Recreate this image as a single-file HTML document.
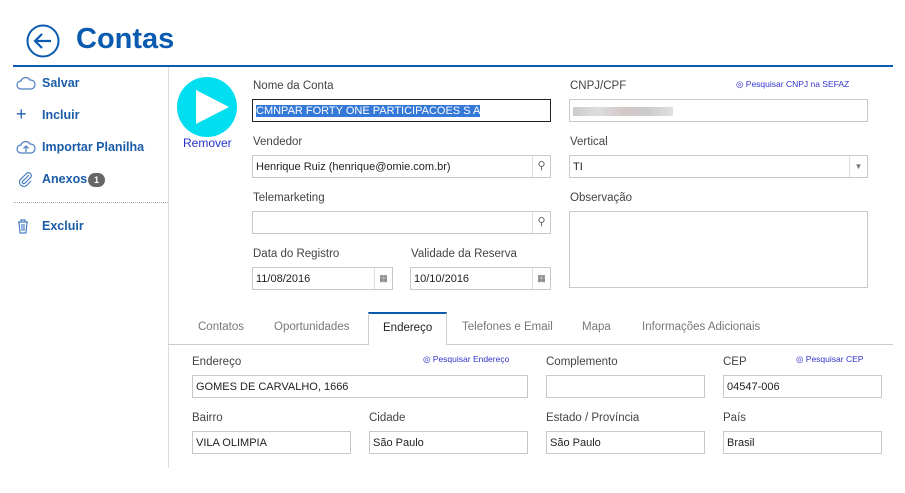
<!DOCTYPE html>
<html><head><meta charset="utf-8"><style>
*{box-sizing:border-box;margin:0;padding:0}
body{width:905px;height:493px;background:#fff;font-family:"Liberation Sans",sans-serif;position:relative;overflow:hidden;color:#333}
.a{position:absolute}
.lbl{position:absolute;font-size:11.5px;color:#444}
.in{position:absolute;border:1px solid #c8c8c8;height:23px;font-size:11px;line-height:23px;padding-left:3px;color:#222;background:#fff}
.side{position:absolute;left:42px;font-size:12.5px;font-weight:bold;color:#1a5ca8}
.tab{position:absolute;top:321px;font-size:11.5px;color:#777}
.lnk{position:absolute;font-size:8.5px;color:#3333cc}
.ic{position:absolute;right:0;top:0;width:18px;height:21px;line-height:21px;border-left:1px solid #ddd}
</style></head><body>
<svg class="a" style="left:26px;top:24px" width="34" height="34" viewBox="0 0 34 34"><circle cx="17" cy="17" r="15.5" fill="none" stroke="#0a5bb0" stroke-width="2"/><path d="M25 17H10M16 10l-7 7 7 7" fill="none" stroke="#0a5bb0" stroke-width="2.2"/></svg>
<div class="a" style="left:76px;top:23px;font-size:29px;font-weight:bold;color:#0a5bb0">Contas</div>
<div class="a" style="left:13px;top:65px;width:880px;height:2px;background:#0a5bb0"></div>
<div class="a" style="left:168px;top:67px;width:1px;height:401px;background:#ddd"></div>
<svg class="a" style="left:16px;top:76px" width="20" height="14" viewBox="0 0 20 14"><path d="M5 13a4 4 0 0 1 0-8 5 5 0 0 1 9-1 4.5 4.5 0 0 1 1 9z" fill="none" stroke="#4a7fc0" stroke-width="1.2"/></svg>
<div class="side" style="top:76px">Salvar</div>
<div class="a" style="left:16px;top:104px;font-size:18px;color:#1a5ca8">+</div>
<div class="side" style="top:108px">Incluir</div>
<svg class="a" style="left:16px;top:140px" width="20" height="14" viewBox="0 0 20 14"><path d="M5 13a4 4 0 0 1 0-8 5 5 0 0 1 9-1 4.5 4.5 0 0 1 1 9z" fill="none" stroke="#4a7fc0" stroke-width="1.2"/><path d="M10 12V6M7.5 8.5L10 6l2.5 2.5" fill="none" stroke="#4a7fc0" stroke-width="1.2"/></svg>
<div class="side" style="top:140px">Importar Planilha</div>
<svg class="a" style="left:17px;top:171px" width="16" height="16" viewBox="0 0 16 16"><path d="M12 4L5.5 10.5a1.5 1.5 0 0 0 2 2L14 6a3 3 0 0 0-4-4L3 9a4.5 4.5 0 0 0 6 6l5-5" fill="none" stroke="#4a7fc0" stroke-width="1.2"/></svg>
<div class="side" style="top:172px">Anexos</div>
<div class="a" style="left:88px;top:173px;width:17px;height:14px;border-radius:7px;background:#666;color:#fff;font-size:9px;font-weight:bold;text-align:center;line-height:14px">1</div>
<div class="a" style="left:13px;top:202px;width:155px;border-top:1px dotted #aaa"></div>
<svg class="a" style="left:17px;top:219px" width="12" height="15" viewBox="0 0 12 15"><path d="M1 3h10M4 3V1h4v2M2 3l1 11h6l1-11M5 5v7M7 5v7" fill="none" stroke="#4a7fc0" stroke-width="1.2"/></svg>
<div class="side" style="top:219px">Excluir</div>
<svg class="a" style="left:177px;top:77px" width="60" height="60" viewBox="0 0 60 60"><circle cx="30" cy="30" r="30" fill="#00def0"/><path d="M19 13L52 30 19 47z" fill="#fff"/></svg>
<div class="a" style="left:183px;top:136px;font-size:12px;color:#2233cc">Remover</div>
<div class="lbl" style="left:253px;top:80px">Nome da Conta</div>
<div class="in" style="left:252px;top:99px;width:299px;border:1px solid #222"><span style="background:#3478d8;color:#fff">CMNPAR FORTY ONE PARTICIPACOES S A</span></div>
<div class="lbl" style="left:570px;top:80px">CNPJ/CPF</div>
<div class="lnk" style="left:736px;top:79px">◎ Pesquisar CNPJ na SEFAZ</div>
<div class="in" style="left:569px;top:99px;width:299px"><span style="display:inline-block;vertical-align:middle;width:100px;height:9px;background:linear-gradient(90deg,#ccc,#ddd,#d4c8c8,#ccc,#e0e0e0)"></span></div>
<div class="lbl" style="left:253px;top:136px">Vendedor</div>
<div class="in" style="left:252px;top:155px;width:299px">Henrique Ruiz (henrique@omie.com.br)<div class="ic" style="font-size:11px;text-align:center;color:#666">⚲</div></div>
<div class="lbl" style="left:570px;top:136px">Vertical</div>
<div class="in" style="left:569px;top:155px;width:299px">TI<div class="ic" style="font-size:8px;text-align:center;color:#777">▼</div></div>
<div class="lbl" style="left:253px;top:192px">Telemarketing</div>
<div class="in" style="left:252px;top:211px;width:299px"><div class="ic" style="font-size:11px;text-align:center;color:#666">⚲</div></div>
<div class="lbl" style="left:570px;top:192px">Observação</div>
<div class="in" style="left:569px;top:211px;width:299px;height:77px"></div>
<div class="lbl" style="left:253px;top:248px">Data do Registro</div>
<div class="in" style="left:252px;top:267px;width:141px">11/08/2016<div class="ic" style="font-size:9px;text-align:center;color:#666">▦</div></div>
<div class="lbl" style="left:411px;top:248px">Validade da Reserva</div>
<div class="in" style="left:410px;top:267px;width:141px">10/10/2016<div class="ic" style="font-size:9px;text-align:center;color:#666">▦</div></div>
<div class="a" style="left:168px;top:344px;width:725px;height:1px;background:#ccc"></div>
<div class="a" style="left:368px;top:312px;width:79px;height:33px;border:1px solid #ccc;border-top:2px solid #0a5bb0;border-bottom:none;background:#fff"></div>
<div class="tab" style="left:198px">Contatos</div>
<div class="tab" style="left:274px">Oportunidades</div>
<div class="tab" style="left:383px;color:#222;top:322px">Endereço</div>
<div class="tab" style="left:462px">Telefones e Email</div>
<div class="tab" style="left:582px">Mapa</div>
<div class="tab" style="left:642px">Informações Adicionais</div>
<div class="lbl" style="left:192px;top:356px">Endereço</div>
<div class="lnk" style="left:423px;top:354px">◎ Pesquisar Endereço</div>
<div class="in" style="left:192px;top:375px;width:336px">GOMES DE CARVALHO, 1666</div>
<div class="lbl" style="left:546px;top:356px">Complemento</div>
<div class="in" style="left:546px;top:375px;width:159px"></div>
<div class="lbl" style="left:723px;top:356px">CEP</div>
<div class="lnk" style="left:796px;top:354px">◎ Pesquisar CEP</div>
<div class="in" style="left:723px;top:375px;width:159px">04547-006</div>
<div class="lbl" style="left:192px;top:412px">Bairro</div>
<div class="in" style="left:192px;top:431px;width:159px">VILA OLIMPIA</div>
<div class="lbl" style="left:369px;top:412px">Cidade</div>
<div class="in" style="left:369px;top:431px;width:159px">São Paulo</div>
<div class="lbl" style="left:546px;top:412px">Estado / Província</div>
<div class="in" style="left:546px;top:431px;width:159px">São Paulo</div>
<div class="lbl" style="left:723px;top:412px">País</div>
<div class="in" style="left:723px;top:431px;width:159px">Brasil</div>
</body></html>
